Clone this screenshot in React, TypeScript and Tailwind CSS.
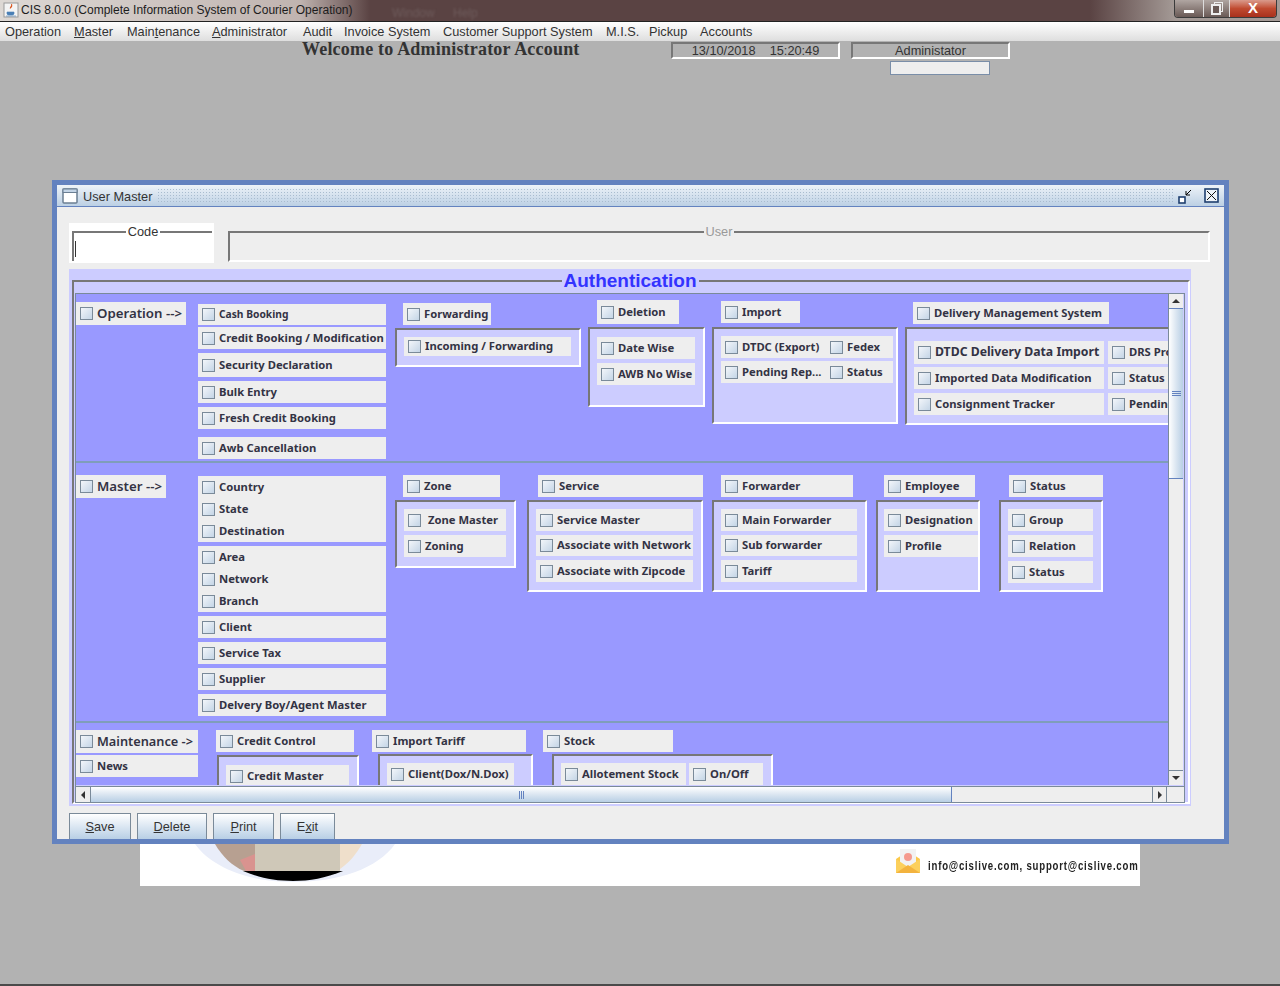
import type { ReactNode } from 'react';

const sans = 'font-["Liberation_Sans",sans-serif]';
const tick = 'w-[13px] h-[13px] shrink-0 border border-[#7a8a99] bg-gradient-to-br from-[#f3f6fa] to-[#c4d5e6]';

function Chk({ label, className, labelClass = 'text-[11.25px] font-bold' }: { label: string; className: string; labelClass?: string }) {
  return (
    <div className={`flex items-center bg-[#eeeeee] pl-[4px] shrink-0 overflow-hidden whitespace-nowrap ${className}`}>
      <span className={tick} />
      <span className={`ml-[4px] font-["Noto_Sans",sans-serif] text-[#333344] ${labelClass}`}>{label}</span>
    </div>
  );
}

function Group({ className, children }: { className: string; children: ReactNode }) {
  return (
    <div className={`bg-[#ccccff] border-2 border-t-[#777] border-l-[#777] border-r-white border-b-white shrink-0 ${className}`}>
      {children}
    </div>
  );
}

const head = 'text-[13.25px] font-semibold';

function App() {
  return (
    <div className="w-[1280px] h-[986px] bg-[#b2b2b2] overflow-hidden flex flex-col">
      {/* native title bar */}
      <div className="h-[22px] shrink-0 flex bg-[linear-gradient(to_right,#ddd8d4_0,#c0b4b0_300px,#5a4343_370px,#5a4343_1090px,#a49a96_1175px)] border-b border-[#222]">
        <div className="w-[20px] h-[20px] ml-[1px] flex items-center justify-center">
          <svg width="16" height="16" viewBox="0 0 16 16">
            <rect x="1" y="1" width="14" height="14" fill="#f4f4f4" stroke="#999" />
            <path d="M8 2c1 2-2 3-1 5 1-1 3-2 2-5z" fill="#d9541e" />
            <path d="M4 10h7v2a2 2 0 0 1-2 1H6a2 2 0 0 1-2-1z M3 14h10" fill="#4a7fb5" stroke="#4a7fb5" strokeWidth="0.6" />
          </svg>
        </div>
        <span className={`text-[12px] leading-[21px] text-[#1c1c1c] w-[371px] shrink-0 ${sans}`}>CIS 8.0.0 (Complete Information System of Courier Operation)</span>
        <span className={`text-[12px] leading-[26px] text-[#6e5c5c] blur-[1px] w-[61px] shrink-0 ${sans}`}>Window</span>
        <span className={`text-[12px] leading-[26px] text-[#6e5c5c] blur-[1px] ${sans}`}>Help</span>
        <div className="ml-auto mr-[3px] w-[103px] h-[18px] flex rounded-b-[4px] border border-[#3b3b3b] border-t-0 overflow-hidden">
          <div className="w-[29px] flex items-center justify-center bg-gradient-to-b from-[#b0a6a2] to-[#6a5a56] border-r border-[#ddd]">
            <span className="w-[10px] h-[3px] mt-[5px] bg-white border-[#444]" />
          </div>
          <div className="w-[26px] flex items-center justify-center bg-gradient-to-b from-[#b0a6a2] to-[#6a5a56] border-r border-[#ddd]">
            <svg width="12" height="13" viewBox="0 0 12 13">
              <rect x="3.5" y="0.5" width="8" height="9" fill="none" stroke="#eee" />
              <rect x="1" y="3" width="8" height="9" fill="#6a5a56" stroke="#eee" strokeWidth="2" />
            </svg>
          </div>
          <div className={`flex-1 flex items-center justify-center bg-gradient-to-b from-[#d99a8c] via-[#c04a30] to-[#a8301c] text-white text-[15px] font-bold ${sans}`}>X</div>
        </div>
      </div>

      {/* menu bar */}
      <div className={`h-[19px] shrink-0 flex items-center pl-[5px] text-[12.75px] text-[#333] bg-gradient-to-b from-white to-[#dedede] ${sans}`}>
        <span className="w-[69px]">Operation</span>
        <span className="w-[53px]"><u>M</u>aster</span>
        <span className="w-[85px]">Main<u>t</u>enance</span>
        <span className="w-[91px]"><u>A</u>dministrator</span>
        <span className="w-[41px]">Audit</span>
        <span className="w-[99px]">Invoice System</span>
        <span className="w-[163px]">Customer Support System</span>
        <span className="w-[43px]">M.I.S.</span>
        <span className="w-[51px]">Pickup</span>
        <span>Accounts</span>
      </div>

      {/* header strip */}
      <div className="h-[139px] shrink-0 flex items-start">
        <div className={`ml-[302px] w-[369px] -mt-[1px] text-[18px] leading-[18px] font-bold text-[#333] font-["Liberation_Serif",serif] tracking-[0.2px]`}>
          Welcome to Administrator Account
        </div>
        <div className="flex flex-col">
          <div className="flex">
            <div className={`w-[169px] h-[17px] mt-[1px] border-2 border-t-[#777] border-l-[#777] border-r-white border-b-white text-[12.75px] leading-[13px] text-center text-[#333] ${sans}`}>13/10/2018&nbsp;&nbsp;&nbsp; 15:20:49</div>
            <div className={`ml-[11px] w-[159px] h-[17px] mt-[1px] border-2 border-t-[#777] border-l-[#777] border-r-white border-b-white text-[12.75px] leading-[13px] text-center text-[#333] ${sans}`}>Administator</div>
          </div>
          <div className="ml-[219px] mt-[2px] w-[100px] h-[14px] bg-[#eeeeee] border border-[#7a8ea8]" />
        </div>
      </div>

      {/* internal frame */}
      <div className="ml-[52px] w-[1177px] h-[664px] shrink-0 border-[5px] border-[#6382bf] flex flex-col bg-[#eeeeee]">
        <div className="h-[22px] shrink-0 flex items-center bg-gradient-to-b from-[#eef3f8] to-[#bcd0e4] border-b border-[#6382bf]">
          <svg className="ml-[5px] shrink-0" width="16" height="16" viewBox="0 0 16 16">
            <rect x="1" y="1" width="14" height="14" rx="1" fill="#fff" stroke="#6b7f93" strokeWidth="1.5" />
            <rect x="1" y="1" width="14" height="3.5" fill="#c3d4e6" stroke="#6b7f93" />
          </svg>
          <span className={`ml-[5px] mt-[2px] text-[12.75px] text-[#333] ${sans}`}>User Master</span>
          <div className="ml-[5px] flex-1 h-[15px] bg-[radial-gradient(#a9bccf_1px,transparent_1px)] bg-[length:3px_3px]" />
          <svg className="ml-[5px] shrink-0" width="14" height="16" viewBox="0 0 14 16">
            <rect x="1" y="9" width="6" height="6" fill="#fff" stroke="#1f3f6f" strokeWidth="1.6" />
            <path d="M13 2 8 7M8 3v4h4" fill="none" stroke="#000" strokeWidth="1" />
          </svg>
          <svg className="ml-[12px] mr-[5px] shrink-0" width="15" height="15" viewBox="0 0 15 15">
            <rect x="1" y="1" width="13" height="13" fill="#eef3f8" stroke="#1f3f6f" strokeWidth="1.6" />
            <path d="M3 3l9 9M12 3l-9 9" stroke="#111" strokeWidth="1" />
          </svg>
        </div>

        <div className="flex-1 flex flex-col pl-[12px]">
          {/* code and user */}
          <div className="h-[62px] flex items-start shrink-0">
            <div className="mt-[16px] w-[145px] h-[40px] bg-white pl-[3px] pt-[8px]">
              <div className="h-[30px] w-[140px] border-t-2 border-l-2 border-[#777]">
                <div className="flex justify-center -mt-[9px]">
                  <span className={`px-[2px] bg-white text-[12.75px] leading-[15px] text-[#333] ${sans}`}>Code</span>
                </div>
                <span className="block w-[1px] h-[16px] ml-[1px] mt-[2px] bg-[#333]" />
              </div>
            </div>
            <div className="mt-[24px] ml-[14px] w-[982px] h-[31px] border-2 border-t-[#777] border-l-[#777] border-r-white border-b-white flex justify-center">
              <span className={`-mt-[9px] h-[15px] px-[2px] bg-[#eeeeee] text-[12.75px] leading-[15px] text-[#999] ${sans}`}>User</span>
            </div>
          </div>

          {/* authentication */}
          <div className="w-[1122px] h-[537px] shrink-0 bg-[#ccccff] pl-[3px] pt-[11px]">
            <div className="w-[1118px] h-[524px] border-2 border-t-[#777] border-l-[#777] border-r-white border-b-white">
              <div className="flex justify-center">
                <span className={`-mt-[10px] -translate-x-[1px] h-[18px] px-[2px] bg-[#ccccff] text-[19px] leading-[18px] font-bold text-[#3333ff] ${sans}`}>Authentication</span>
              </div>
              <div className="ml-[1px] mt-[3px] w-[1110px] h-[510px] border border-[#7a8a99] flex flex-col">
                <div className="h-[492px] flex">
                  {/* scroll view */}
                  <div className="w-[1092px] h-[491px] overflow-hidden bg-[#9999ff] flex flex-col">
                    {/* Operation row */}
                    <div className="h-[169px] shrink-0 flex border-b-2 border-[#7f9db9]">
                      <Chk labelClass={head} label="Operation -->" className="w-[110px] h-[23px] mt-[8px]" />
                      <div className="ml-[12px] w-[188px] pt-[10px] flex flex-col shrink-0">
                        <Chk labelClass="text-[10.25px] font-bold" label="Cash Booking" className="h-[21px]" />
                        <Chk label="Credit Booking / Modification" className="h-[22px] mt-[2px]" />
                        <Chk label="Security Declaration" className="h-[24px] mt-[4px]" />
                        <Chk label="Bulk Entry" className="h-[22px] mt-[4px]" />
                        <Chk label="Fresh Credit Booking" className="h-[22px] mt-[4px]" />
                        <Chk label="Awb Cancellation" className="h-[22px] mt-[8px]" />
                      </div>
                      <div className="ml-[9px] w-[186px] pt-[9px] flex flex-col shrink-0">
                        <Chk label="Forwarding" className="ml-[8px] w-[88px] h-[22px]" />
                        <Group className="mt-[3px] h-[39px] pl-[7px] pt-[7px]">
                          <Chk label="Incoming / Forwarding" className="w-[167px] h-[19px]" />
                        </Group>
                      </div>
                      <div className="ml-[7px] w-[117px] pt-[6px] flex flex-col shrink-0">
                        <Chk label="Deletion" className="ml-[9px] w-[82px] h-[24px]" />
                        <Group className="mt-[3px] h-[80px] pl-[7px] pt-[8px]">
                          <Chk label="Date Wise" className="w-[98px] h-[22px]" />
                          <Chk label="AWB No Wise" className="w-[98px] h-[22px] mt-[4px]" />
                        </Group>
                      </div>
                      <div className="ml-[7px] w-[186px] pt-[7px] flex flex-col shrink-0">
                        <Chk label="Import" className="ml-[9px] w-[79px] h-[22px]" />
                        <Group className="mt-[4px] h-[97px] pl-[7px] pt-[7px]">
                          <div className="flex w-[172px] h-[22px] bg-[#eeeeee]">
                            <Chk label="DTDC (Export)" className="w-[105px]" />
                            <Chk label="Fedex" className="flex-1" />
                          </div>
                          <div className="flex w-[172px] h-[22px] mt-[3px] bg-[#eeeeee]">
                            <Chk label="Pending Rep..." className="w-[105px]" />
                            <Chk label="Status" className="flex-1" />
                          </div>
                        </Group>
                      </div>
                      <div className="ml-[7px] w-[264px] pt-[8px] flex flex-col shrink-0">
                        <Chk label="Delivery Management System" className="ml-[8px] w-[196px] h-[22px]" />
                        <Group className="mt-[3px] w-[270px] h-[98px] pl-[7px] pt-[12px] border-r-0">
                          <div className="flex">
                            <Chk labelClass="text-[12.25px] font-bold" label="DTDC Delivery Data Import" className="w-[190px] h-[23px]" />
                            <Chk label="DRS Process" className="ml-[4px] w-[70px] h-[23px]" />
                          </div>
                          <div className="flex mt-[3px]">
                            <Chk label="Imported Data Modification" className="w-[190px] h-[22px]" />
                            <Chk label="Status Update" className="ml-[4px] w-[70px] h-[22px]" />
                          </div>
                          <div className="flex mt-[4px]">
                            <Chk label="Consignment Tracker" className="w-[190px] h-[22px]" />
                            <Chk label="Pending List" className="ml-[4px] w-[70px] h-[22px]" />
                          </div>
                        </Group>
                      </div>
                    </div>

                    {/* Master row */}
                    <div className="h-[260px] shrink-0 flex border-b-2 border-[#7f9db9]">
                      <Chk labelClass={head} label="Master -->" className="w-[90px] h-[23px] mt-[12px]" />
                      <div className="ml-[32px] w-[188px] pt-[13px] flex flex-col shrink-0">
                        <div className="bg-[#eeeeee] h-[66px] flex flex-col">
                          <Chk label="Country" className="h-[22px]" />
                          <Chk label="State" className="h-[22px]" />
                          <Chk label="Destination" className="h-[22px]" />
                        </div>
                        <div className="bg-[#eeeeee] h-[66px] mt-[4px] flex flex-col">
                          <Chk label="Area" className="h-[22px]" />
                          <Chk label="Network" className="h-[22px]" />
                          <Chk label="Branch" className="h-[22px]" />
                        </div>
                        <Chk label="Client" className="h-[22px] mt-[4px]" />
                        <Chk label="Service Tax" className="h-[22px] mt-[4px]" />
                        <Chk label="Supplier" className="h-[22px] mt-[4px]" />
                        <Chk label="Delvery Boy/Agent Master" className="h-[22px] mt-[4px]" />
                      </div>
                      <div className="ml-[9px] w-[121px] pt-[12px] flex flex-col shrink-0">
                        <Chk label="Zone" className="ml-[8px] w-[97px] h-[22px]" />
                        <Group className="mt-[3px] h-[68px] pl-[7px] pt-[7px]">
                          <Chk label={'\u00A0Zone Master'} className="w-[102px] h-[22px]" />
                          <Chk label="Zoning" className="w-[102px] h-[22px] mt-[4px]" />
                        </Group>
                      </div>
                      <div className="ml-[11px] w-[176px] pt-[12px] flex flex-col shrink-0">
                        <Chk label="Service" className="ml-[11px] w-[165px] h-[22px]" />
                        <Group className="mt-[3px] h-[92px] pl-[7px] pt-[7px]">
                          <Chk label="Service Master" className="w-[157px] h-[22px]" />
                          <Chk label="Associate with Network" className="w-[157px] h-[21px] mt-[4px]" />
                          <Chk label="Associate with Zipcode" className="w-[157px] h-[22px] mt-[4px]" />
                        </Group>
                      </div>
                      <div className="ml-[9px] w-[155px] pt-[12px] flex flex-col shrink-0">
                        <Chk label="Forwarder" className="ml-[9px] w-[132px] h-[22px]" />
                        <Group className="mt-[3px] h-[92px] pl-[7px] pt-[7px]">
                          <Chk label="Main Forwarder" className="w-[136px] h-[22px]" />
                          <Chk label="Sub forwarder" className="w-[136px] h-[21px] mt-[4px]" />
                          <Chk label="Tariff" className="w-[136px] h-[22px] mt-[4px]" />
                        </Group>
                      </div>
                      <div className="ml-[9px] w-[104px] pt-[12px] flex flex-col shrink-0">
                        <Chk label="Employee" className="ml-[8px] w-[91px] h-[22px]" />
                        <Group className="mt-[3px] h-[92px] pl-[6px] pt-[7px]">
                          <Chk label="Designation" className="w-[94px] h-[22px]" />
                          <Chk label="Profile" className="w-[94px] h-[22px] mt-[4px]" />
                        </Group>
                      </div>
                      <div className="ml-[19px] w-[104px] pt-[12px] flex flex-col shrink-0">
                        <Chk label="Status" className="ml-[10px] w-[94px] h-[22px]" />
                        <Group className="mt-[3px] h-[92px] pl-[7px] pt-[7px]">
                          <Chk label="Group" className="w-[85px] h-[22px]" />
                          <Chk label="Relation" className="w-[85px] h-[22px] mt-[4px]" />
                          <Chk label="Status" className="w-[85px] h-[22px] mt-[4px]" />
                        </Group>
                      </div>
                    </div>

                    {/* Maintenance row */}
                    <div className="h-[62px] shrink-0 flex overflow-hidden">
                      <div className="w-[122px] pt-[7px] flex flex-col shrink-0">
                        <Chk labelClass="text-[12.75px] font-semibold" label="Maintenance ->" className="h-[23px]" />
                        <Chk label="News" className="h-[22px] mt-[2px]" />
                      </div>
                      <div className="ml-[18px] w-[143px] pt-[7px] flex flex-col shrink-0">
                        <Chk label="Credit Control" className="w-[138px] h-[22px]" />
                        <Group className="ml-[1px] mt-[3px] h-[60px] pl-[7px] pt-[8px]">
                          <Chk label="Credit Master" className="w-[123px] h-[22px]" />
                        </Group>
                      </div>
                      <div className="ml-[13px] w-[161px] pt-[7px] flex flex-col shrink-0">
                        <Chk label="Import Tariff" className="w-[154px] h-[22px]" />
                        <Group className="ml-[6px] mt-[2px] h-[60px] pl-[7px] pt-[7px]">
                          <Chk label="Client(Dox/N.Dox)" className="w-[127px] h-[22px]" />
                        </Group>
                      </div>
                      <div className="ml-[10px] w-[230px] pt-[7px] flex flex-col shrink-0">
                        <Chk label="Stock" className="w-[130px] h-[22px]" />
                        <Group className="ml-[9px] mt-[2px] h-[60px] pl-[7px] pt-[7px]">
                          <div className="flex">
                            <Chk label="Allotement Stock" className="w-[125px] h-[22px]" />
                            <Chk label="On/Off" className="ml-[3px] w-[74px] h-[22px]" />
                          </div>
                        </Group>
                      </div>
                    </div>
                  </div>

                  {/* vertical scrollbar */}
                  <div className="w-[15px] h-[491px] bg-[#eeeeee] border-l border-[#7a8a99] flex flex-col shrink-0">
                    <div className="h-[15px] flex items-center justify-center border-b border-[#6382bf] bg-[#eeeeee]">
                      <span className="w-0 h-0 border-x-[4px] border-x-transparent border-b-[4px] border-b-[#333]" />
                    </div>
                    <div className="h-[170px] flex flex-col justify-center items-center gap-[1px] border-b border-[#6382bf] bg-gradient-to-r from-white via-[#dbe6f1] to-[#b8cfe5]">
                      <span className="w-[9px] h-[1px] bg-[#6382bf]" />
                      <span className="w-[9px] h-[1px] bg-[#6382bf]" />
                      <span className="w-[9px] h-[1px] bg-[#6382bf]" />
                    </div>
                    <div className="flex-1" />
                    <div className="h-[15px] flex items-center justify-center border-t border-[#7a8a99]">
                      <span className="w-0 h-0 border-x-[4px] border-x-transparent border-t-[4px] border-t-[#333]" />
                    </div>
                  </div>
                </div>

                {/* horizontal scrollbar */}
                <div className="h-[16px] flex border-t border-[#7a8a99] bg-[#eeeeee]">
                  <div className="w-[15px] flex items-center justify-center border-r border-[#7a8a99]">
                    <span className="w-0 h-0 border-y-[4px] border-y-transparent border-r-[4px] border-r-[#333]" />
                  </div>
                  <div className="w-[861px] flex items-center justify-center gap-[1px] border-r border-[#6382bf] bg-gradient-to-b from-white via-[#dbe6f1] to-[#b8cfe5]">
                    <span className="w-[1px] h-[8px] bg-[#6382bf]" />
                    <span className="w-[1px] h-[8px] bg-[#6382bf]" />
                    <span className="w-[1px] h-[8px] bg-[#6382bf]" />
                  </div>
                  <div className="w-[200px]" />
                  <div className="w-[15px] flex items-center justify-center border-x border-[#7a8a99]">
                    <span className="w-0 h-0 border-y-[4px] border-y-transparent border-l-[4px] border-l-[#333]" />
                  </div>
                </div>
              </div>
            </div>
          </div>

          {/* buttons */}
          <div className={`mt-[7px] flex items-start gap-[6px] text-[12.75px] text-[#333] ${sans}`}>
            <button className="w-[62px] h-[26px] border border-b-0 border-[#7a8a99] bg-gradient-to-b from-white to-[#b8cfe5]"><u>S</u>ave</button>
            <button className="w-[70px] h-[26px] border border-b-0 border-[#7a8a99] bg-gradient-to-b from-white to-[#b8cfe5]"><u>D</u>elete</button>
            <button className="w-[61px] h-[26px] border border-b-0 border-[#7a8a99] bg-gradient-to-b from-white to-[#b8cfe5]"><u>P</u>rint</button>
            <button className="w-[55px] h-[26px] border border-b-0 border-[#7a8a99] bg-gradient-to-b from-white to-[#b8cfe5]">E<u>x</u>it</button>
          </div>
        </div>
      </div>

      {/* splash image behind the frame */}
      <div className="ml-[140px] w-[1000px] h-[42px] shrink-0 bg-white flex">
        <svg className="ml-[40px] shrink-0" width="240" height="42" viewBox="0 0 240 42">
          <path d="M15 0C32 24 70 38 113 38C160 38 198 24 215 0Z" fill="#e9edf9" />
          <path d="M35 0C42 12 52 22 64 27H75V0Z" fill="#b7a091" />
          <path d="M60 16L75 10V27H66Z" fill="#d9938f" />
          <rect x="75" y="0" width="85" height="27" fill="#cfc8b8" />
          <path d="M160 0h22c-6 10-12 18-22 25z" fill="#efdfcb" />
          <path d="M63 27H163C145 34 130 37 113 37C95 37 80 34 63 27Z" fill="#000" />
        </svg>
        <svg className="ml-[475px] mt-[4px] shrink-0" width="26" height="26" viewBox="0 0 26 26">
          <path d="M1 11 13 3l12 8v14H1z" fill="#fbc94a" />
          <rect x="5" y="1" width="16" height="17" fill="#f2f2f2" />
          <circle cx="13" cy="9" r="4" fill="#f59a8e" />
          <path d="M1 11 13 19l12-8v14H1z" fill="#fcd05c" />
          <path d="M1 25 13 17l12 8z" fill="#f3b33e" />
        </svg>
        <span className={`ml-[7px] mt-[14px] w-[205px] shrink-0 text-[12px] leading-[16px] font-bold tracking-[1px] text-[#222] scale-x-[0.8] origin-left whitespace-nowrap ${sans}`}>
          info@cislive.com, support@cislive.com
        </span>
      </div>

      {/* taskbar edge */}
      <div className="mt-[98px] h-[2px] shrink-0 bg-[#4a4a4a]" />
    </div>
  );
}

export default App;
